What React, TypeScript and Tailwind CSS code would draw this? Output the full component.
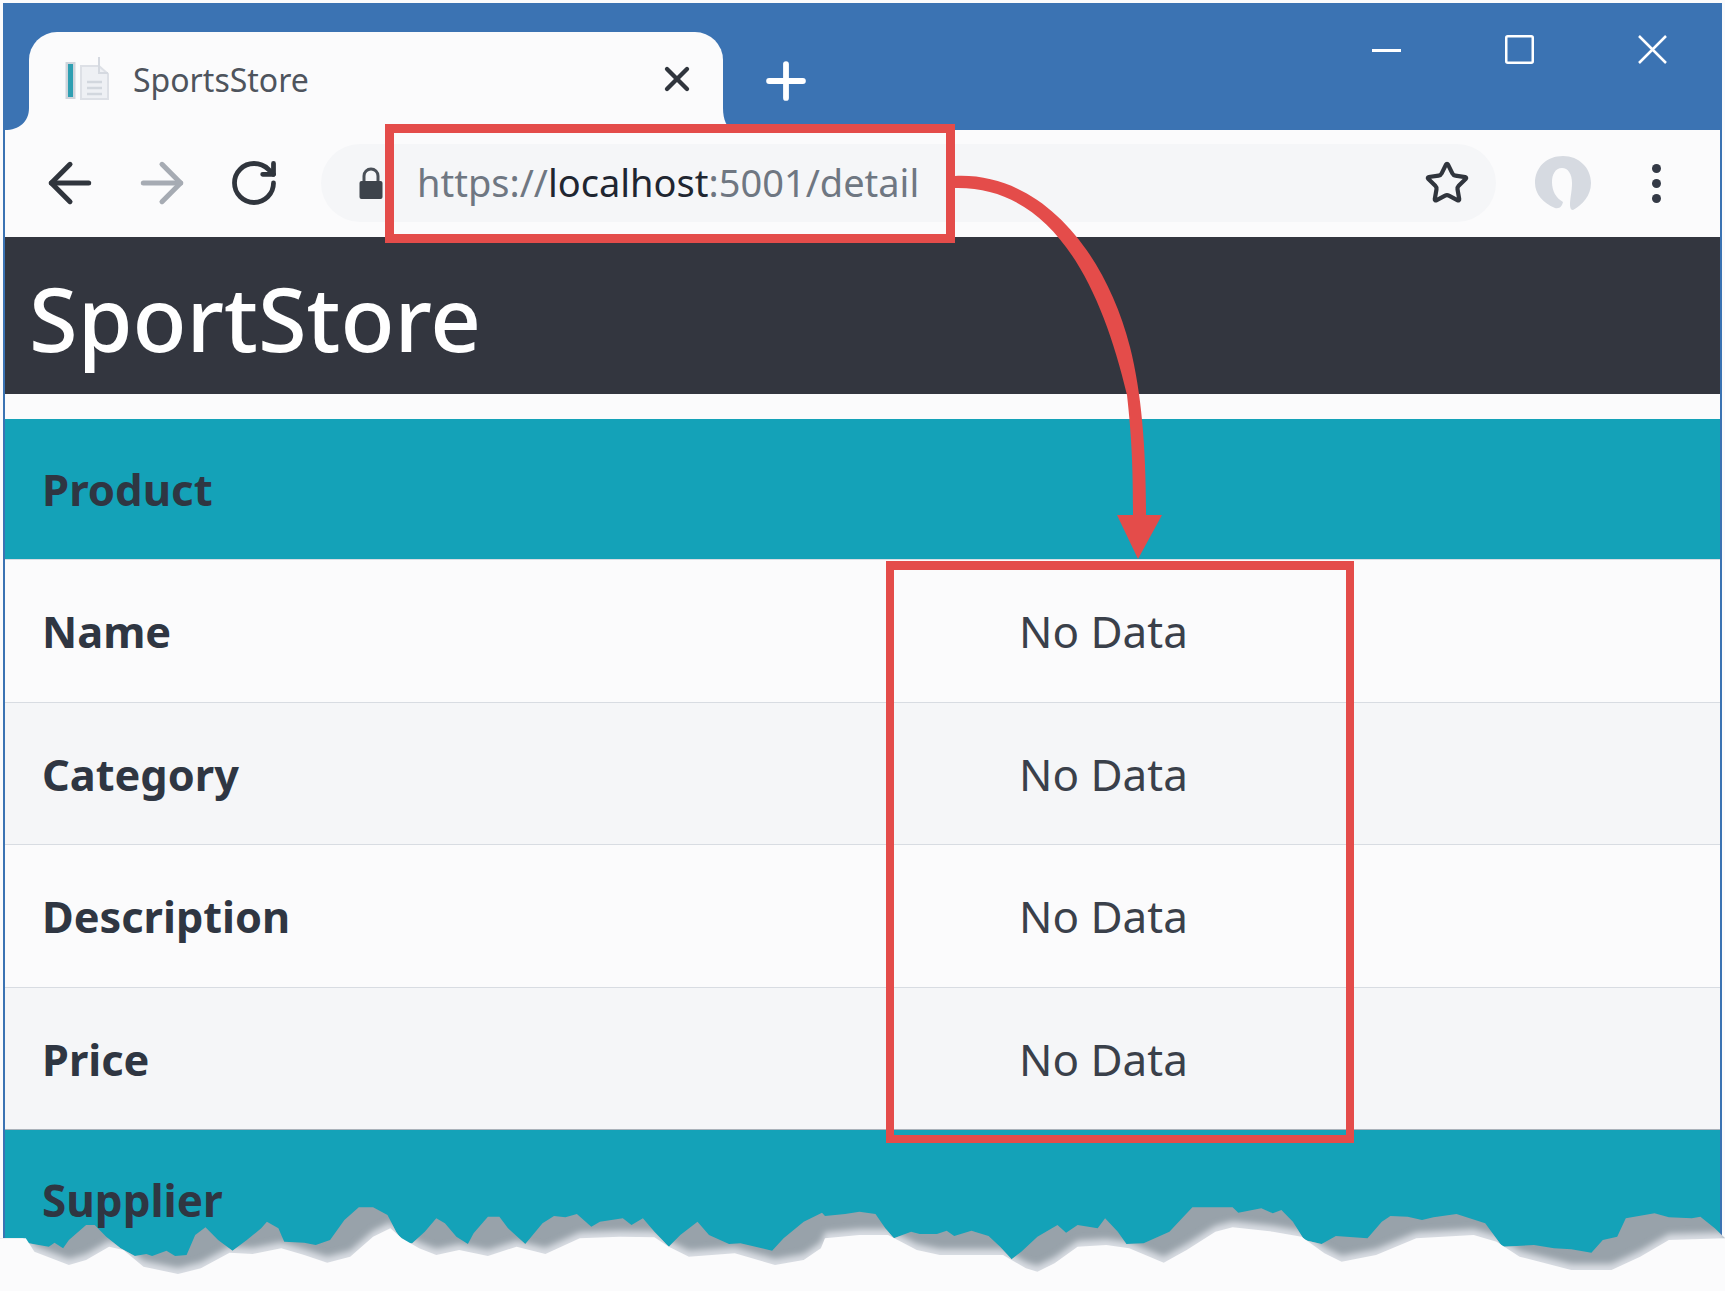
import React from 'react'
import { ArrowLeft, ArrowRight, RotateCw, Star, X, Plus } from 'lucide-react'

const font = "font-['Noto_Sans','Open_Sans',sans-serif]"

const rows = [
  { label: 'Name', bg: 'bg-[#fbfbfc]', h: 'h-[143px]' },
  { label: 'Category', bg: 'bg-[#f5f6f8]', h: 'h-[142px]' },
  { label: 'Description', bg: 'bg-[#fbfbfc]', h: 'h-[143px]' },
  { label: 'Price', bg: 'bg-[#f5f6f8]', h: 'h-[142px]' },
]

// torn paper edge, traced off the picture (x, y in zoomed crop units)
const tealLeft = [[0,415],[40,415],[50,430],[85,440],[95,428],[110,445],[120,420],[150,375],[165,375],[185,410],[210,445],[235,468],[255,462],[265,468],[290,452],[305,468],[325,465],[340,405],[358,382],[380,420],[405,452],[430,420],[455,385],[465,365],[485,385],[495,425],[530,428],[550,435],[575,420],[600,360],[625,322],[650,322],[675,345],[690,395],[705,432],[718,430],[740,395],[760,355],[775,370],[795,410],[815,432],[825,400],[850,350],[870,350],[885,385],[915,432],[945,370],[965,348],[985,352],[1005,342],[1030,380],[1045,365],[1085,355],[1100,375],[1120,355],[1140,395],[1165,440],[1185,405],[1215,365],[1235,405],[1270,432],[1290,430],[1345,452],[1365,415],[1400,365],[1432,338]]
const tealRight = [[0,348],[35,342],[60,335],[88,342],[105,385],[120,415],[150,395],[165,402],[195,402],[212,392],[225,408],[255,392],[285,408],[305,440],[325,478],[342,455],[370,410],[405,375],[420,398],[440,375],[475,385],[488,355],[510,395],[525,432],[555,430],[600,395],[640,322],[710,322],[720,338],[760,325],[780,340],[795,330],[815,365],[835,420],[865,432],[890,408],[945,415],[970,365],[985,348],[1015,350],[1040,360],[1060,352],[1100,342],[1150,370],[1180,440],[1235,435],[1270,445],[1300,448],[1335,458],[1355,420],[1380,410],[1395,355],[1445,340],[1470,352],[1510,355],[1525,350],[1550,385],[1568,415]]
const whiteLeft = [[0,415],[45,415],[60,455],[120,495],[150,480],[190,440],[215,450],[250,500],[310,522],[350,505],[400,458],[440,462],[490,445],[530,465],[570,488],[610,470],[650,410],[680,385],[700,415],[730,445],[760,465],[800,450],[850,468],[900,440],[950,462],[1010,415],[1080,410],[1140,412],[1165,440],[1200,470],[1280,460],[1350,495],[1400,480],[1430,445]]
const whiteRight = [[0,415],[60,405],[110,405],[160,450],[200,465],[310,465],[350,505],[370,515],[400,490],[440,440],[490,435],[530,445],[590,488],[630,450],[680,395],[710,382],[780,395],[830,410],[870,460],[900,485],[960,465],[1030,415],[1130,405],[1170,425],[1210,470],[1300,510],[1370,510],[1420,470],[1470,420],[1568,415]]

const toPoints = (left: number[][], right: number[][]) =>
  [...left.map(([x, y]) => [x / 1.742, y / 3]), ...right.map(([x, y]) => [825 + x / 1.742, y / 3])]
    .map(([x, y]) => `${x.toFixed(1)},${y.toFixed(1)}`)
    .join(' ')

const tealEdge = toPoints(tealLeft, tealRight)
const whiteEdge = toPoints(whiteLeft, whiteRight)

function TornEdge() {
  const paper = `0,191 ${whiteEdge} 1725,138 1725,191`
  const shade = `0,191 ${tealEdge} 1725,138 1725,191`
  return (
    <svg className="absolute left-0 top-[1100px]" width="1725" height="191" viewBox="0 0 1725 191">
      <defs>
        <clipPath id="shade">
          <polygon points={shade} />
        </clipPath>
        <filter id="soft" x="-5%" y="-20%" width="110%" height="140%">
          <feGaussianBlur stdDeviation="3" />
        </filter>
      </defs>
      <polygon points={shade} fill="#98a2aa" />
      <g clipPath="url(#shade)">
        <polygon points={paper} fill="#d9dde3" transform="translate(0,-6)" filter="url(#soft)" />
      </g>
      <polygon points={paper} fill="#fbfbfc" />
    </svg>
  )
}

function Favicon() {
  return (
    <svg width="45" height="44" viewBox="0 0 45 44" fill="none">
      <rect x="0.5" y="5" width="10" height="37" fill="#cfd5dc" />
      <rect x="3" y="7" width="5" height="33" fill="#2f9fb2" />
      <path d="M16 9h18l9 8v25H16z" fill="#eef0f4" stroke="#dde0e6" strokeWidth="2" />
      <path d="M34 0v16h9" stroke="#d5d9e0" strokeWidth="2" />
      <path d="M22 25h15M22 31h15M22 37h15" stroke="#d2d7de" strokeWidth="2.5" />
    </svg>
  )
}

function Avatar() {
  return (
    <svg width="56" height="54" viewBox="0 0 56 54">
      <path
        d="M20 52C8 47 0 38 0 27 0 11 12 0 28 0 44 0 56 12 56 27 56 40 47 49 38 54 36 54 35 52 35 49 35 42 37 36 37 27 37 18 33 12 27 12 20 12 17 19 17 26 17 35 21 42 28 46 27 50 25 53 20 52z"
        fill="#d6dae1"
      />
    </svg>
  )
}

function Lock() {
  return (
    <svg width="24" height="33" viewBox="0 0 24 33">
      <path d="M5 15V9a7 7 0 0 1 14 0v6" fill="none" stroke="#4a5058" strokeWidth="3" />
      <rect x="0.5" y="14" width="23" height="18" rx="2" fill="#3d434b" />
    </svg>
  )
}

function WindowControls() {
  return (
    <div className="ml-auto mt-[32px] flex gap-[104px] self-start pr-[53px]">
      <svg width="29" height="29" viewBox="0 0 29 29" stroke="#fff" strokeWidth="3" fill="none">
        <path d="M0 15.5h29" />
      </svg>
      <svg width="29" height="29" viewBox="0 0 29 29" stroke="#fff" strokeWidth="2.5" fill="none">
        <rect x="1.25" y="1.25" width="26.5" height="26.5" rx="1.5" />
      </svg>
      <svg width="29" height="29" viewBox="0 0 29 29" stroke="#fff" strokeWidth="2.5" fill="none">
        <path d="M1 1l27 27M28 1L1 28" />
      </svg>
    </div>
  )
}

export default function App() {
  return (
    <div className={`relative h-[1291px] w-[1725px] overflow-hidden bg-[#fbfbfc] pl-[3px] pr-[3px] pt-[3px] ${font}`}>
      <div className="flex h-full flex-col border-x-2 border-[#3b73b3]">
        {/* title bar */}
        <div className="flex h-[127px] items-end bg-[#3b73b3] pl-[24px]">
          <div className="relative flex h-[98px] w-[694px] items-center rounded-t-[28px] bg-[#fbfbfc] pb-[4px] pl-[36px] pr-[26px]">
            <svg className="absolute bottom-0 left-[-24px]" width="24" height="22" viewBox="0 0 24 22">
              <path d="M24 0v22H0C14 22 24 14 24 0z" fill="#fbfbfc" />
            </svg>
            <svg className="absolute bottom-0 right-[-10px]" width="10" height="22" viewBox="0 0 10 22">
              <path d="M0 0v22h10C4 20 0 12 0 0z" fill="#fbfbfc" />
            </svg>
            <Favicon />
            <span className="ml-[23px] pt-[2px] text-[32px] leading-none text-[#4e545d]">SportsStore</span>
            <X className="ml-auto h-[40px] w-[40px] text-[#30353d]" strokeWidth={2.6} />
          </div>
          <Plus className="mb-[20px] ml-[34px] h-[58px] w-[58px] text-white" strokeWidth={2.4} />
          <WindowControls />
        </div>

        {/* toolbar */}
        <div className="flex h-[106.5px] shrink-0 items-center pl-[32.5px]">
          <ArrowLeft className="h-[64px] w-[64px] text-[#30353d]" strokeWidth={1.9} />
          <ArrowRight className="ml-[28.5px] h-[64px] w-[64px] text-[#a6abb3]" strokeWidth={1.9} />
          <RotateCw className="ml-[34px] h-[52px] w-[52px] text-[#30353d]" strokeWidth={2.2} />
          <div className="ml-[41px] flex h-[78px] w-[1175px] items-center rounded-full bg-[#f5f6f8] pl-[38px] pr-[26px]">
            <Lock />
            <div className="ml-[34px] pb-[2px] text-[38px] leading-none text-[#6f7782]">
              https://<span className="text-[#1f2631]">localhost</span>:5001/detail
            </div>
            <Star className="ml-auto h-[46px] w-[46px] text-[#30353d]" strokeWidth={2.2} />
          </div>
          <div className="ml-[39px]">
            <Avatar />
          </div>
          <div className="ml-[61px] flex flex-col gap-[6px]">
            <div className="h-[9px] w-[9px] rounded-full bg-[#343a46]" />
            <div className="h-[9px] w-[9px] rounded-full bg-[#343a46]" />
            <div className="h-[9px] w-[9px] rounded-full bg-[#343a46]" />
          </div>
        </div>

        {/* navbar */}
        <div className="flex h-[157px] shrink-0 items-center bg-[#33363f] pl-[24px] pt-[6px]">
          <span className="text-[88.5px] font-medium leading-none text-white">SportStore</span>
        </div>
        <div className="h-[25.5px] shrink-0" />

        {/* table */}
        <div className="flex h-[140px] shrink-0 items-center bg-[#14a2b8] pl-[37px] pt-[2px]">
          <span className="text-[43.7px] font-bold leading-none text-[#2f3642]">Product</span>
        </div>
        {rows.map((row) => (
          <div
            key={row.label}
            className={`grid shrink-0 grid-cols-[1014px_1fr] items-center border-t border-[#d8dce2] ${row.bg} ${row.h}`}
          >
            <span className="pl-[37px] pt-[2px] text-[43.3px] font-bold leading-none text-[#2f3642]">{row.label}</span>
            <span className="text-[44px] leading-none text-[#3a404a]">No Data</span>
          </div>
        ))}
        <div className="flex-1 border-t border-[#aab2ba] bg-[#14a2b8]">
          <div className="flex h-[140px] items-center pl-[37px]">
            <span className="text-[44px] font-bold leading-none text-[#2f3642]">Supplier</span>
          </div>
        </div>
      </div>

      <TornEdge />

      {/* red callouts */}
      <div className="absolute left-[385px] top-[124px] h-[119px] w-[570px] border-[9px] border-[#e44c4a]" />
      <div className="absolute left-[886px] top-[561px] h-[582px] w-[468px] border-[8px] border-t-[9px] border-[#e44c4a]" />
      <svg className="absolute left-0 top-0" width="1725" height="600" viewBox="0 0 1725 600">
        <path
          d="M955 176C1040 172 1105 250 1130 347 1142 395 1146 450 1146 516L1133 516C1133 470 1132 440 1127 395 1100 280 1050 186 955 188z"
          fill="#e44c4a"
        />
        <polygon points="1117,515 1162,515 1138,559" fill="#e44c4a" />
      </svg>
    </div>
  )
}
